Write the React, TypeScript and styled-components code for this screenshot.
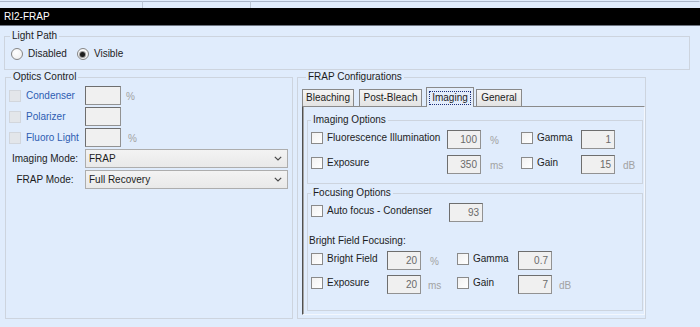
import styled, { createGlobalStyle } from "styled-components";

const GlobalStyle = createGlobalStyle`
  * { box-sizing: border-box; }
  html, body { margin: 0; padding: 0; background: #e0ecfc; }
  body {
    font-family: "Liberation Sans", Arial, sans-serif;
    font-size: 10px;
    color: #1c1c1c;
  }
`;

const Window = styled.div`
  width: 700px;
  height: 327px;
  overflow: hidden;
  display: flex;
  flex-direction: column;
  background: #e0ecfc;
`;

const TopStrip = styled.div`
  display: flex;
  height: 8px;
  padding-top: 1px;
`;

const StubCell = styled.div<{ $w?: number }>`
  ${(p) => (p.$w ? `width: ${p.$w}px;` : "flex: 1;")}
  border-top: 1px solid #aab6ca;
  border-right: 1px solid ${(p) => (p.$w ? "#bcc7d6" : "transparent")};
`;

const TitleBar = styled.div`
  height: 18px;
  background: #000;
  border-bottom: 1px solid #6d7480;
  color: #fff;
  padding-left: 4px;
  display: flex;
  align-items: center;
  line-height: 12px;
`;

const Content = styled.div`
  padding: 4px 10px 0 4px;
  display: flex;
  flex-direction: column;
`;

const GroupBox = styled.fieldset`
  margin: 0;
  padding: 0;
  min-width: 0;
  border: 1px solid #cdd4de;
`;

const Legend = styled.legend<{ $offset?: number }>`
  margin-left: ${(p) => p.$offset ?? 5}px;
  padding: 0 2px;
  line-height: 12px;
  font-size: 10px;
  color: #1c1c1c;
`;

const RadioRow = styled.div`
  display: flex;
  align-items: center;
  gap: 10px;
  padding: 6px 0 9px 6px;
`;

const RadioOption = styled.label`
  display: flex;
  align-items: center;
  gap: 5px;
  line-height: 12px;
`;

const RadioDot = styled.span<{ $on?: boolean }>`
  width: 12px;
  height: 12px;
  border-radius: 50%;
  border: 1px solid #858585;
  background: radial-gradient(circle at 40% 35%, #ffffff, #ececec);
  display: grid;
  place-items: center;
  &::after {
    content: "";
    width: 5px;
    height: 5px;
    border-radius: 50%;
    background: ${(p) => (p.$on ? "#1d1d1d" : "transparent")};
    box-shadow: ${(p) => (p.$on ? "0 0 0 1px #9a9a9a" : "none")};
  }
`;

const MainRow = styled.div`
  display: flex;
  gap: 4px;
  margin-top: 1px;
  padding-left: 1px;
  height: 248px;
`;

const OpticsBox = styled(GroupBox)`
  width: 288px;
`;

const OpticsBody = styled.div`
  display: flex;
  flex-direction: column;
  gap: 2px;
  padding: 3px 0 0 3px;
`;

const OptRow = styled.div`
  display: flex;
  align-items: center;
  height: 19px;
`;

const DimCheck = styled.span`
  width: 12px;
  height: 12px;
  background: #e3e6ea;
  border: 1px solid #d2d6dc;
`;

const OptLabel = styled.span`
  width: 59px;
  margin-left: 5px;
  color: #2d5db2;
`;

const TextBox = styled.div<{ $w?: number }>`
  width: ${(p) => p.$w ?? 34}px;
  height: 19px;
  background: #f0f0f0;
  border: 1px solid #929292;
  border-top-color: #6e6e6e;
  border-left-color: #6e6e6e;
  color: #6a6a6a;
  text-align: right;
  padding-right: 3px;
  line-height: 17px;
`;

const Unit = styled.span<{ $pad?: number }>`
  padding-left: ${(p) => p.$pad ?? 6}px;
  color: #a2a2a2;
  line-height: 12px;
  margin-top: 3px;
  align-self: center;
`;

const ComboLabel = styled.span`
  width: 76px;
  padding-right: 4px;
  text-align: center;
`;

const Combo = styled.div`
  width: 203px;
  height: 19px;
  border: 1px solid #adadad;
  background: linear-gradient(#f3f3f3, #e9e9e9);
  display: flex;
  align-items: center;
  justify-content: space-between;
  padding: 0 5px 0 3px;
`;

const Chevron = () => (
  <svg width="8" height="5" viewBox="0 0 8 5">
    <polyline points="0.8,0.8 4,4 7.2,0.8" fill="none" stroke="#4a4a4a" strokeWidth="1.2" />
  </svg>
);

const FrapBox = styled(GroupBox)`
  width: 349px;
  display: flex;
  flex-direction: column;
  padding: 4px 0 3px 4px;
`;

const TabStrip = styled.div`
  display: flex;
  align-items: flex-end;
  height: 20px;
  margin-bottom: -1px;
  position: relative;
  z-index: 1;
`;

const Tab = styled.div<{ $w: number; $ml?: number; $active?: boolean }>`
  width: ${(p) => p.$w}px;
  margin-left: ${(p) => p.$ml ?? 0}px;
  height: ${(p) => (p.$active ? 20 : 17)}px;
  margin-bottom: ${(p) => (p.$active ? 0 : 1)}px;
  border: 1px solid #898989;
  border-bottom: none;
  background: ${(p) => (p.$active ? "#e3edfb" : "linear-gradient(#f5f5f5, #e3e3e3)")};
  display: flex;
  align-items: ${(p) => (p.$active ? "flex-start" : "center")};
  padding-top: ${(p) => (p.$active ? 3 : 0)}px;
  justify-content: center;
  line-height: 12px;
`;

const FocusRect = styled.span`
  border: 1px dotted #1c2f78;
  padding: 0 2px;
`;

const TabPanel = styled.div`
  flex: 1;
  border-top: 1px solid #8a8a8a;
  border-left: 1px solid #505050;
  border-right: 1px solid #f3f7fd;
  border-bottom: 1px solid #f3f7fd;
  box-shadow: inset 1px 0 0 #a4a4a4;
  padding: 7px 1px 1px 4px;
  display: flex;
  flex-direction: column;
`;

const OptionsBody = styled.div<{ $bottom: number }>`
  display: flex;
  flex-direction: column;
  padding: 4px 0 ${(p) => p.$bottom}px 3px;
`;

const OptionRow = styled.div<{ $cols: string; $mt?: number }>`
  display: grid;
  grid-template-columns: ${(p) => p.$cols};
  align-items: start;
  height: 19px;
  margin-top: ${(p) => p.$mt ?? 0}px;
`;

const CheckItem = styled.label`
  display: flex;
  align-items: center;
  gap: 4px;
  margin-top: 2px;
  line-height: 12px;
`;

const Check = styled.span`
  width: 12px;
  height: 12px;
  border: 1px solid #8a8a8a;
  background: linear-gradient(135deg, #f1f1f1, #ffffff);
`;

const SubHeading = styled.div`
  margin: 13px 0 4px -2px;
  line-height: 12px;
`;

const FocusBox = styled(GroupBox)`
  margin-top: 3px;
`;

export default function App() {
  return (
    <>
      <GlobalStyle />
      <Window>
        <TopStrip>
          <StubCell $w={143} />
          <StubCell $w={108} />
          <StubCell />
        </TopStrip>
        <TitleBar>RI2-FRAP</TitleBar>

        <Content>
          <GroupBox>
            <Legend>Light Path</Legend>
            <RadioRow>
              <RadioOption>
                <RadioDot />
                Disabled
              </RadioOption>
              <RadioOption>
                <RadioDot $on />
                Visible
              </RadioOption>
            </RadioRow>
          </GroupBox>

          <MainRow>
            <OpticsBox>
              <Legend>Optics Control</Legend>
              <OpticsBody>
                <OptRow>
                  <DimCheck />
                  <OptLabel>Condenser</OptLabel>
                  <TextBox $w={36} />
                  <Unit $pad={5}>%</Unit>
                </OptRow>
                <OptRow>
                  <DimCheck />
                  <OptLabel>Polarizer</OptLabel>
                  <TextBox $w={36} />
                </OptRow>
                <OptRow>
                  <DimCheck />
                  <OptLabel>Fluoro Light</OptLabel>
                  <TextBox $w={36} />
                  <Unit $pad={7}>%</Unit>
                </OptRow>
                <OptRow>
                  <ComboLabel>Imaging Mode:</ComboLabel>
                  <Combo>
                    FRAP
                    <Chevron />
                  </Combo>
                </OptRow>
                <OptRow>
                  <ComboLabel>FRAP Mode:</ComboLabel>
                  <Combo>
                    Full Recovery
                    <Chevron />
                  </Combo>
                </OptRow>
              </OpticsBody>
            </OpticsBox>

            <FrapBox>
              <Legend $offset={4}>FRAP Configurations</Legend>
              <TabStrip>
                <Tab $w={52}>Bleaching</Tab>
                <Tab $w={63} $ml={5}>Post-Bleach</Tab>
                <Tab $w={48} $ml={4} $active>
                  <FocusRect>Imaging</FocusRect>
                </Tab>
                <Tab $w={46} $ml={2}>General</Tab>
              </TabStrip>

              <TabPanel>
                <GroupBox>
                  <Legend $offset={3}>Imaging Options</Legend>
                  <OptionsBody $bottom={9}>
                    <OptionRow $cols="136px 34px 40px 60px 34px auto">
                      <CheckItem>
                        <Check />
                        Fluorescence Illumination
                      </CheckItem>
                      <TextBox>100</TextBox>
                      <Unit $pad={9}>%</Unit>
                      <CheckItem>
                        <Check />
                        Gamma
                      </CheckItem>
                      <TextBox>1</TextBox>
                    </OptionRow>
                    <OptionRow $cols="136px 34px 40px 60px 34px auto" $mt={6}>
                      <CheckItem>
                        <Check />
                        Exposure
                      </CheckItem>
                      <TextBox>350</TextBox>
                      <Unit $pad={9}>ms</Unit>
                      <CheckItem>
                        <Check />
                        Gain
                      </CheckItem>
                      <TextBox>15</TextBox>
                      <Unit $pad={8}>dB</Unit>
                    </OptionRow>
                  </OptionsBody>
                </GroupBox>

                <FocusBox>
                  <Legend $offset={3}>Focusing Options</Legend>
                  <OptionsBody $bottom={16}>
                    <OptionRow $cols="138px 34px">
                      <CheckItem>
                        <Check />
                        Auto focus - Condenser
                      </CheckItem>
                      <TextBox>93</TextBox>
                    </OptionRow>
                    <SubHeading>Bright Field Focusing:</SubHeading>
                    <OptionRow $cols="76px 34px 36px 61px 34px auto">
                      <CheckItem>
                        <Check />
                        Bright Field
                      </CheckItem>
                      <TextBox>20</TextBox>
                      <Unit $pad={9}>%</Unit>
                      <CheckItem>
                        <Check />
                        Gamma
                      </CheckItem>
                      <TextBox>0.7</TextBox>
                    </OptionRow>
                    <OptionRow $cols="76px 34px 36px 61px 34px auto" $mt={5}>
                      <CheckItem>
                        <Check />
                        Exposure
                      </CheckItem>
                      <TextBox>20</TextBox>
                      <Unit $pad={7}>ms</Unit>
                      <CheckItem>
                        <Check />
                        Gain
                      </CheckItem>
                      <TextBox>7</TextBox>
                      <Unit $pad={7}>dB</Unit>
                    </OptionRow>
                  </OptionsBody>
                </FocusBox>
              </TabPanel>
            </FrapBox>
          </MainRow>
        </Content>
      </Window>
    </>
  );
}
